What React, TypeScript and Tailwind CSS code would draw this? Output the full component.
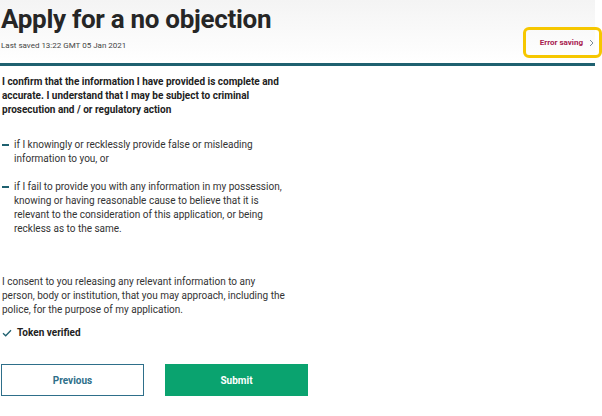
import React from 'react';

const teal = '#1f6170';

const Bullet: React.FC<{ children: React.ReactNode }> = ({ children }) => (
  <div className="flex items-start">
    <span className="mt-[6px] mr-[5px] h-[2px] w-[7px] shrink-0 bg-[#1f6170]" />
    <p>{children}</p>
  </div>
);

const App: React.FC = () => {
  return (
    <div className="h-[416px] w-[602px] overflow-hidden bg-white text-[#222] [font-family:Roboto,'Liberation_Sans',sans-serif]">
      {/* Kopf */}
      <div className="w-[595px] border-b-[3px] border-[#1f6170] bg-gradient-to-b from-[#f4f4f4] to-white">
        <div className="flex items-end justify-between pb-[11px]">
          <div className="pl-[1px]">
            <h1 className="pt-[3px] text-[26px] font-bold leading-[32px] tracking-[-0.3px] text-[#262626]">
              Apply for a no objection
            </h1>
            <p className="mt-[5px] text-[8px] leading-[12px] text-[#444]">Last saved 13:22 GMT 05 Jan 2021</p>
          </div>
          <div className="-mr-[7px] mb-[-6px] flex h-[31px] w-[79px] items-center justify-end rounded-[6px] border-[3px] border-[#f6c700] pr-[5px]">
            <span className="text-[8px] font-bold text-[#a8204f]">Error saving</span>
            <svg className="ml-[6px]" width="5" height="8" viewBox="0 0 5 8" fill="none">
              <path d="M1 1l3 3-3 3" stroke="#7a8a9a" strokeWidth="1" />
            </svg>
          </div>
        </div>
      </div>

      {/* Inhalt */}
      <div className="w-[310px] whitespace-nowrap pl-[2px] text-[10px] leading-[14px]">
        <p className="mt-[9px] font-bold text-[#222]">
          I confirm that the information I have provided is complete and
          <br />
          accurate. I understand that I may be subject to criminal
          <br />
          prosecution and / or regulatory action
        </p>
        <div className="mt-[21px] flex flex-col gap-[14px] text-[#333]">
          <Bullet>
            if I knowingly or recklessly provide false or misleading
            <br />
            information to you, or
          </Bullet>
          <Bullet>
            if I fail to provide you with any information in my possession,
            <br />
            knowing or having reasonable cause to believe that it is
            <br />
            relevant to the consideration of this application, or being
            <br />
            reckless as to the same.
          </Bullet>
        </div>
        <p className="mt-[39px] text-[#333]">
          I consent to you releasing any relevant information to any
          <br />
          person, body or institution, that you may approach, including the
          <br />
          police, for the purpose of my application.
        </p>
        <div className="mt-[9px] flex items-center">
          <svg width="10" height="8" viewBox="0 0 10 8" fill="none">
            <path d="M1 4.2l2.7 2.6L9 1.2" stroke={teal} strokeWidth="1.3" />
          </svg>
          <span className="ml-[5px] font-bold text-[#222]">Token verified</span>
        </div>
      </div>

      <div className="mt-[24px] flex gap-[21px] pl-[1px]">
        <button className="h-[32px] w-[143px] border-[1.5px] border-[#2e6f8a] text-[10px] font-bold text-[#2e6f8a]">
          Previous
        </button>
        <button className="h-[32px] w-[143px] bg-[#0aa36f] text-[10px] font-bold text-white">Submit</button>
      </div>
    </div>
  );
};

export default App;
